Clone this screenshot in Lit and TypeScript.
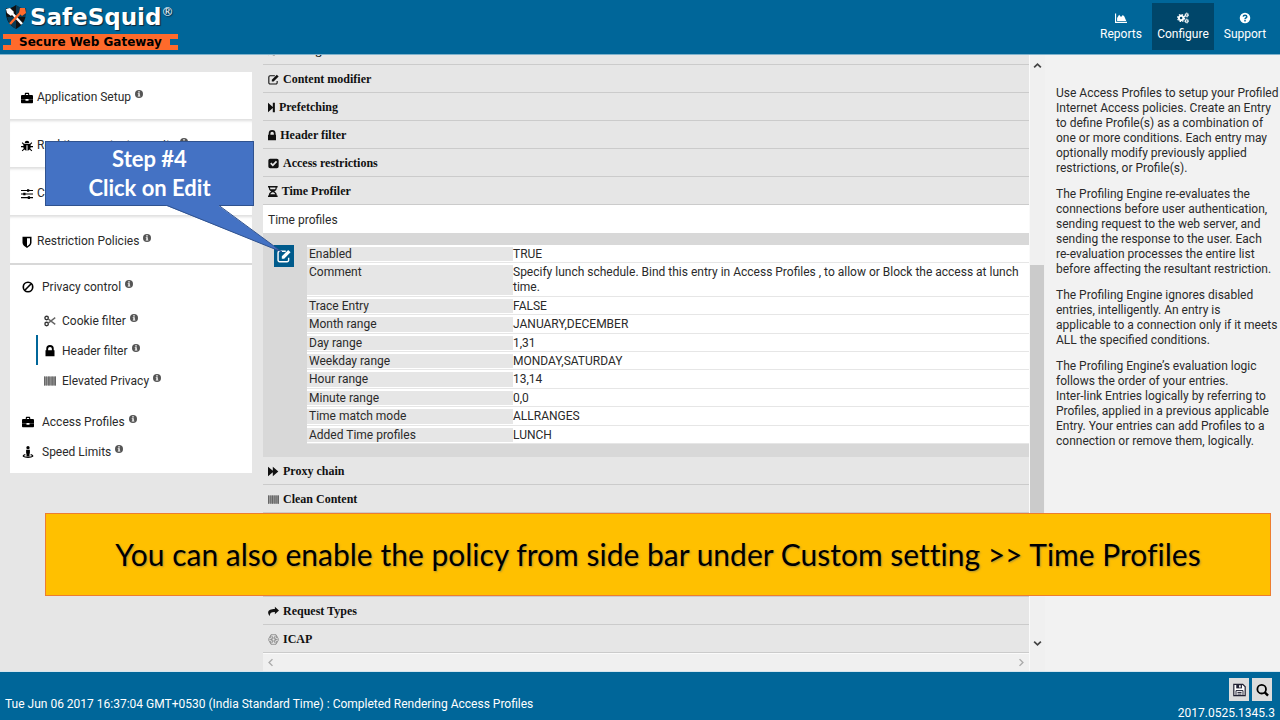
import { LitElement, html, css, svg, nothing, TemplateResult } from "lit";
import { customElement } from "lit/decorators.js";
import { classMap } from "lit/directives/class-map.js";

const shapes: Record<string, TemplateResult> = {
  briefcase: svg`<path d="M5 4V2.600C5 1.700 5.600 1 6.500 1h3C10.400 1 11 1.700 11 2.600V4h3.500c.800 0 1.500.700 1.500 1.500V9.200H0V5.500C0 4.700.700 4 1.500 4zm1.500 0h3V2.500h-3zM0 9.800h6v1.700h4V9.800h6v3.700c0 .800-.700 1.500-1.500 1.500h-13C.700 15 0 14.300 0 13.500z"/>`,
  bug: svg`<path d="M5 4a3 3 0 0 1 6 0zM4 5h8l2-2 1 1-2.200 2.300V8H16v1.500h-3.200c0 1-.2 1.700-.5 2.300L15 14l-1 1-2.500-2.200c-.8.9-1.700 1.400-2.800 1.600V7H7.300v7.400c-1.100-.2-2-.7-2.800-1.600L2 15l-1-1 2.700-2.200c-.3-.6-.5-1.300-.5-2.300H0V8h3.200V6.300L1 4l1-1z"/>`,
  sliders: svg`<path d="M0 2.500h8v-1h3v1h5V4h-5v1H8V4H0zM0 7.300h3v-1h3v1h10v1.500H6v1H3v-1H0zM0 12h9v-1h3v1h4v1.500h-4v1H9v-1H0z"/>`,
  shield: svg`<path fill-rule="evenodd" d="M2 1h12v8c0 3-3 5-6 7-3-2-6-4-6-7zm6 2v10.600c2-1.300 4-2.700 4-4.600V3z"/>`,
  ban: svg`<g fill="none" stroke="currentColor" stroke-width="2.200"><circle cx="8" cy="8" r="6.300"/><path d="M12.300 3.700l-8.600 8.600"/></g>`,
  cut: svg`<g fill="none" stroke="#333" stroke-width="1.800"><circle cx="3.500" cy="4" r="2.300"/><circle cx="3.500" cy="12" r="2.300"/><path d="M5.500 5.200L15 12.500M5.500 10.800L15 3.500" stroke="#666"/></g>`,
  lock: svg`<path fill-rule="evenodd" d="M3 7V5a5 5 0 0 1 10 0v2h1v8H2V7zm2.500 0h5V5a2.500 2.500 0 0 0-5 0z"/>`,
  barcode: svg`<path fill="#999" d="M0 2h16v12H0z"/><path fill="#666" d="M0 2h1.500v12H0zM3 2h1v12H3zM5.500 2h2v12h-2zM9 2h1v12H9zM11 2h1.500v12H11zM14 2h2v12h-2z"/>`,
  street: svg`<circle cx="8" cy="2.200" r="2.200"/><path d="M5.500 5h5v5H10v4H6v-4h-.500z"/><path fill="none" stroke="currentColor" stroke-width="1.500" d="M4.500 11.500C-1 13 2 15.200 8 15.200s9-2.200 3.500-3.700"/>`,
  edit: svg`<path fill="none" stroke="currentColor" stroke-width="1.600" d="M10 2.500H3A1.800 1.800 0 0 0 1.200 4.300v8.400a1.800 1.800 0 0 0 1.800 1.800h8.500a1.800 1.800 0 0 0 1.800-1.800V10"/><path d="M12.800 1l2.700 2.700L8.200 11H5.500V8.300z"/>`,
  step: svg`<path d="M1 1l7 6.200V1h3v14H8V8.800L1 15z"/>`,
  check: svg`<path fill-rule="evenodd" d="M3 1h10a2.500 2.500 0 0 1 2.500 2.500v9A2.500 2.500 0 0 1 13 15H3a2.500 2.500 0 0 1-2.500-2.500v-9A2.500 2.500 0 0 1 3 1zm4 11.200l6.300-6.300-1.800-1.800L7 8.600 4.900 6.500 3.100 8.300z"/>`,
  hourglass: svg`<path fill-rule="evenodd" d="M1 0h14v2.200h-1.200c0 3-1.300 4.700-3.600 5.800 2.300 1.100 3.600 2.800 3.600 5.800H15V16H1v-2.200h1.200c0-3 1.300-4.700 3.600-5.800C3.500 6.900 2.200 5.200 2.200 2.200H1zm3 2.200c0 1 .2 1.800.6 2.500h6.800c.4-.7.600-1.500.6-2.500zM8 9c-1.800.5-3 1.500-3.600 3h7.200C11 10.500 9.800 9.500 8 9z"/>`,
  forward: svg`<path d="M0 1l7 6V1l8 7-8 7V9l-7 6z"/>`,
  share: svg`<path d="M10 1l6 5.500-6 5.500V8.800C5 8.700 2.800 10 2.500 14.500 1.300 13 0 11 .200 9 .6 5.500 4.500 4.200 10 4.200z"/>`,
  hex: svg`<g fill="none" stroke="#777" stroke-width="1"><path d="M4.300 1h7.400L15.500 8l-3.800 7H4.300L.5 8z"/><circle cx="8" cy="8" r="2.200"/><circle cx="5" cy="4.600" r="1.600"/><circle cx="11" cy="4.600" r="1.600"/><circle cx="5" cy="11.400" r="1.600"/><circle cx="11" cy="11.400" r="1.600"/><path d="M2 8h4M10 8h4"/></g>`,
  chart: svg`<path d="M0 2h1.500v11H16v1.500H0zM2.800 12V8l2.700-4.500L8 6.500 10.500 4l2 2L15 12z"/>`,
  cogs: svg`<g fill="none" stroke="currentColor"><circle cx="5.500" cy="8" r="3" stroke-width="2.600"/><circle cx="5.500" cy="8" r="4.700" stroke-width="1.500" stroke-dasharray="2 1.700"/><circle cx="13" cy="4" r="1.700" stroke-width="1.500"/><circle cx="13" cy="4" r="2.700" stroke-width="1" stroke-dasharray="1.200 .9"/><circle cx="13" cy="12" r="1.700" stroke-width="1.500"/><circle cx="13" cy="12" r="2.700" stroke-width="1" stroke-dasharray="1.200 .9"/></g>`,
  question: svg`<circle cx="8" cy="8" r="7"/><path fill="none" stroke="#069" stroke-width="2" d="M5.600 6.200C5.800 3.500 10.400 3.600 10.400 6.200 10.400 7.800 8 7.800 8 9.600M8 10.800v2"/>`,
  info: svg`<circle cx="8" cy="8" r="8"/><path fill="#fff" d="M6.500 2.500h3v2.300h-3zM5.500 6.300h4v5h1.200v1.900H5.500v-1.900h1.200V8H5.500z"/>`,
  save: svg`<path fill="#fff" stroke="#223" stroke-width="1.500" d="M1 1h11l3 3v11H1z"/><path fill="#223" d="M4 1h7v5H4z"/><path fill="#fff" d="M7.500 2h2v3h-2z"/><path fill="none" stroke="#223" stroke-width="1.200" d="M3.700 15V8.700h8.600V15M5.500 11h5M5.500 13h5"/>`,
  search: svg`<g fill="none" stroke="#000"><circle cx="7" cy="7" r="5.300" stroke-width="2.200"/><path stroke-width="3" d="M10.800 11l4 4"/></g>`,
  up: svg`<path fill="none" stroke="currentColor" stroke-width="3" d="M2 11.500l6-6 6 6"/>`,
  down: svg`<path fill="none" stroke="currentColor" stroke-width="3" d="M2 4.500l6 6 6-6"/>`,
  left: svg`<path fill="none" stroke="currentColor" stroke-width="2.500" d="M11.500 2l-6 6 6 6"/>`,
  right: svg`<path fill="none" stroke="currentColor" stroke-width="2.500" d="M4.500 2l6 6-6 6"/>`,
};

const snug: Record<string, string> = { step: "1 0 10 16", lock: "2 0 12 16", hourglass: "1 0 14 16" };

const glyph = (name: string, cls = "", box = "0 0 16 16") =>
  html`<svg class="icon ${cls}" viewBox=${box} aria-hidden="true">${shapes[name]}</svg>`;

type Item = { icon: string; label: string; active?: boolean };

const sections: Item[] = [
  { icon: "briefcase", label: "Application Setup" },
  { icon: "bug", label: "Real time content security" },
  { icon: "sliders", label: "Custom Settings" },
  { icon: "shield", label: "Restriction Policies" },
];
const privacy: Item[] = [
  { icon: "cut", label: "Cookie filter" },
  { icon: "lock", label: "Header filter", active: true },
  { icon: "barcode", label: "Elevated Privacy" },
];
const above: Item[] = [
  { icon: "step", label: "Caching" },
  { icon: "edit", label: "Content modifier" },
  { icon: "step", label: "Prefetching" },
  { icon: "lock", label: "Header filter" },
  { icon: "check", label: "Access restrictions" },
  { icon: "hourglass", label: "Time Profiler" },
];
const below: Item[] = [
  { icon: "forward", label: "Proxy chain" },
  { icon: "barcode", label: "Clean Content" },
  { icon: "", label: "" },
  { icon: "", label: "" },
  { icon: "", label: "" },
  { icon: "share", label: "Request Types" },
  { icon: "hex", label: "ICAP" },
];
const fields: [string, string][] = [
  ["Enabled", "TRUE"],
  ["Comment", "Specify lunch schedule. Bind this entry in Access Profiles , to allow or Block the access at lunch time."],
  ["Trace Entry", "FALSE"],
  ["Month range", "JANUARY,DECEMBER"],
  ["Day range", "1,31"],
  ["Weekday range", "MONDAY,SATURDAY"],
  ["Hour range", "13,14"],
  ["Minute range", "0,0"],
  ["Time match mode", "ALLRANGES"],
  ["Added Time profiles", "LUNCH"],
];
const help: string[][] = [
  ["Use Access Profiles to setup your Profiled", "Internet Access policies. Create an Entry", "to define Profile(s) as a combination of", "one or more conditions. Each entry may", "optionally modify previously applied", "restrictions, or Profile(s)."],
  ["The Profiling Engine re-evaluates the", "connections before user authentication,", "sending request to the web server, and", "sending the response to the user. Each", "re-evaluation processes the entire list", "before affecting the resultant restriction."],
  ["The Profiling Engine ignores disabled", "entries, intelligently. An entry is", "applicable to a connection only if it meets", "ALL the specified conditions."],
  ["The Profiling Engine’s evaluation logic", "follows the order of your entries.", "Inter-link Entries logically by referring to", "Profiles, applied in a previous applicable", "Entry. Your entries can add Profiles to a", "connection or remove them, logically."],
];

@customElement("app-root")
export class AppRoot extends LitElement {
  static styles = css`
    :host {
      display: flex;
      flex-direction: column;
      position: relative;
      height: 100vh;
      overflow: hidden;
      background: #e6e6e6;
      color: #2a2a2a;
      font: 12px/15px Roboto, "Open Sans", sans-serif;
    }
    * { box-sizing: border-box; }
    a { color: inherit; text-decoration: none; }
    button { font: inherit; color: inherit; border: 0; padding: 0; cursor: pointer; }
    .icon { display: block; width: 12px; height: 12px; flex: none; fill: currentColor; }

    .top {
      display: flex;
      justify-content: space-between;
      align-items: flex-start;
      flex: none;
      height: 55px;
      padding: 3px 4px 0 3px;
      background: #069;
      border-bottom: 1px solid #7fb2cc;
      color: #fff;
    }
    .logo { display: flex; flex-direction: column; width: 175px; font-family: "DejaVu Sans", sans-serif; font-weight: 700; }
    .brand { display: flex; align-items: center; gap: 3px; height: 31px; padding: 0 0 3px 2px; font-size: 23px; line-height: 28px; text-shadow: 1px 1px 1px #123; }
    .crest { width: 22px; height: 26px; flex: none; }
    .reg { align-self: flex-start; font-size: 12px; line-height: 18px; font-weight: 400; margin-left: -3px; }
    .tagline {
      display: grid;
      grid-template-columns: 8px 1fr 8px;
      align-items: center;
      height: 16px;
      background: #ff6a2b;
      color: #000;
      font-size: 12px;
      line-height: 16px;
      text-align: center;
    }
    .notch { height: 6px; background: #069; }
    .menu { display: flex; }
    .tab { display: flex; flex-direction: column; align-items: center; gap: 3px; height: 47px; min-width: 62px; padding: 9px 5px 0; }
    .tab.active { background: #00466a; }

    .main { display: flex; flex: 1; min-height: 0; }
    .side { flex: none; width: 263px; padding: 17px 11px 0 10px; }
    .side .icon { color: #000; }
    .card { display: flex; align-items: center; gap: 4px; height: 48px; padding: 4px 0 0 11px; background: #fff; border-bottom: 1px solid #e2e2e2; box-shadow: inset 0 3px 3px -2px #ddd; }
    .card:first-child { box-shadow: none; }
    .card.open { height: 49px; border-bottom: 2px solid #d8d8d8; }
    .tree { background: #fff; padding: 6px 0 7px; }
    .node { display: flex; align-items: center; gap: 8px; height: 30px; padding: 2px 0 0 12px; }
    .tip { display: flex; gap: 4px; }
    .side .info { width: 8px; height: 8px; color: #555; }
    .nest { padding: 4px 0 11px 26px; }
    .nest .node { gap: 6px; padding-left: 8px; }
    .nest .active { border-left: 2px solid #069; padding-left: 6px; }

    .center { display: flex; flex-direction: column; flex: 1; min-width: 0; }
    .list { display: flex; flex-direction: column; justify-content: flex-end; flex: 1; min-height: 0; overflow: hidden; }
    .row {
      display: flex;
      align-items: center;
      gap: 4px;
      flex: none;
      width: 100%;
      height: 28px;
      padding: 2px 0 0 5px;
      background: #e6e6e6;
      border-bottom: 1px solid #cbcbcb;
      color: #111;
      font: 12px/15px "Liberation Serif", serif;
      font-weight: 700;
      text-align: left;
    }
    .row:first-child { padding-top: 0; }
    .row .icon { width: auto; height: 11px; }
    .subtitle { margin: 0; flex: none; height: 28px; padding: 8px 5px 0; background: #fff; font-size: 12px; line-height: 15px; font-weight: 400; }
    .panel { display: flex; gap: 13px; align-items: flex-start; flex: none; padding: 12px 0 13px 11px; background: #d8d8d8; }
    .edit { display: grid; place-items: center; width: 20px; height: 22px; background: #005b8c; color: #fff; }
    .edit .icon { width: 14px; height: 14px; }
    table { flex: 1; height: 199px; border-spacing: 0; background: #fff; }
    th, td { padding: 2px 0 0; border-bottom: 1px solid #e6e6e6; text-align: left; vertical-align: top; font-weight: 400; }
    th { width: 206px; padding-left: 2px; background: #e6e6e6; box-shadow: inset 0 2px #fff, inset 0 -1px #fff; }
    .hbar { display: flex; justify-content: space-between; align-items: center; flex: none; height: 18px; padding: 0 3px; background: #f0f0f0; border-top: 1px solid #fafafa; color: #aaa; }
    .hbar .icon, .vbar .icon { width: 9px; height: 9px; }
    .vbar { display: flex; flex-direction: column; align-items: center; flex: none; width: 16px; padding: 6px 0 23px; background: #f0f0f0; border-left: 1px solid #fafafa; color: #444; }
    .track { display: flex; flex-direction: column; justify-content: flex-end; flex: 1; width: 100%; padding-bottom: 82px; }
    .thumb { width: 14px; height: 60%; background: #cbcbcb; }

    .help { flex: none; width: 235px; padding: 31px 0 0 11px; background: #f2f2f2; }
    .help p { margin: 0 0 11px; white-space: nowrap; }

    .foot { display: flex; justify-content: space-between; flex: none; height: 49px; background: #069; border-top: 1px solid #d5e5ee; padding: 6px 5px 0; color: #fff; }
    .status { padding-top: 19px; }
    .tools { display: flex; flex-direction: column; align-items: flex-end; gap: 5px; }
    .buttons { display: flex; gap: 3px; padding-right: 3px; }
    .tool { display: grid; place-items: center; width: 20px; height: 23px; background: #ddd; }
    .tool .icon { width: 13px; height: 14px; }

    .callout { position: absolute; left: 45px; top: 141px; width: 209px; height: 65px; padding-top: 2px; background: #4472c4; border: 1px solid #2f528f; color: #fff; font: 700 22px/29px Lato, sans-serif; text-align: center; }
    .tail { position: absolute; left: 160px; top: 204px; width: 125px; height: 50px; }
    .banner { position: absolute; left: 45px; right: 9px; top: 513px; height: 83px; display: flex; align-items: center; justify-content: center; padding-bottom: 2px; background: #ffc000; border: 1px solid #ed7d31; color: #000; font: 30px/36px Lato, sans-serif; font-variant-ligatures: none; text-shadow: 1px 1px 2px #6668; white-space: nowrap; }
  `;

  private tip(label: string) {
    return html`<span class="tip"><span>${label}</span>${glyph("info", "info")}</span>`;
  }

  private node(item: Item) {
    return html`<a href="#" class=${classMap({ node: true, active: !!item.active })}>${glyph(item.icon)}${this.tip(item.label)}</a>`;
  }

  private row(item: Item) {
    return item.label
      ? html`<button class="row">${glyph(item.icon, "", snug[item.icon])}<span>${item.label}</span></button>`
      : html`<div class="row"></div>`;
  }

  render() {
    return html`
      <header class="top">
        <div class="logo">
          <div class="brand">
            <svg class="crest" viewBox="0 0 22 26" aria-hidden="true">
              <path fill="#111" d="M1 4c4 1 7-1 10-3 3 2 6 4 10 3 1 9-2 17-10 21C3 21 0 13 1 4z" />
              <path fill="#069" d="M11 1c3 2 6 4 10 3v9H11zM2 13h9v12C6 22 3 18 2 13z" opacity=".5" />
              <path fill="none" stroke="#fff" stroke-width="2.500" d="M5 7l12 13" />
              <path fill="#fff" d="M1 5l4-1 4 4-3 4-4-3z" />
              <path fill="none" stroke="#ff6a2b" stroke-width="2.500" d="M17 7L5 20" />
              <path fill="#ff6a2b" d="M15 4l5 0 1 5-4 3-3-3z" />
            </svg>
            <span>SafeSquid</span><span class="reg">®</span>
          </div>
          <div class="tagline"><span class="notch"></span><span>Secure Web Gateway</span><span class="notch"></span></div>
        </div>
        <nav class="menu">
          <a href="#" class="tab">${glyph("chart")}<span>Reports</span></a>
          <a href="#" class="tab active">${glyph("cogs")}<span>Configure</span></a>
          <a href="#" class="tab">${glyph("question")}<span>Support</span></a>
        </nav>
      </header>
      <main class="main">
        <nav class="side">
          ${sections.map((s, i) => html`<a href="#" class=${classMap({ card: true, open: i === 3 })}>${glyph(s.icon)}${this.tip(s.label)}</a>`)}
          <div class="tree">
            ${this.node({ icon: "ban", label: "Privacy control" })}
            <div class="nest">${privacy.map((p) => this.node(p))}</div>
            ${this.node({ icon: "briefcase", label: "Access Profiles" })}
            ${this.node({ icon: "street", label: "Speed Limits" })}
          </div>
        </nav>
        <section class="center">
          <div class="list">
            ${above.map((r) => this.row(r))}
            <h2 class="subtitle">Time profiles</h2>
            <div class="panel">
              <button class="edit" aria-label="Edit">${glyph("edit")}</button>
              <table>
                <tbody>
                  ${fields.map(([k, v]) => html`<tr><th scope="row">${k}</th><td>${v}</td></tr>`)}
                </tbody>
              </table>
            </div>
            ${below.map((r) => this.row(r))}
          </div>
          <div class="hbar">${glyph("left")}${glyph("right")}</div>
        </section>
        <div class="vbar">${glyph("up")}<div class="track"><div class="thumb"></div></div>${glyph("down")}</div>
        <aside class="help">
          ${help.map((p) => html`<p>${p.map((line, i) => html`${i ? html`<br />` : nothing}${line}`)}</p>`)}
        </aside>
      </main>
      <footer class="foot">
        <span class="status">Tue Jun 06 2017 16:37:04 GMT+0530 (India Standard Time) : Completed Rendering Access Profiles</span>
        <div class="tools">
          <div class="buttons">
            <button class="tool" aria-label="Save">${glyph("save")}</button>
            <button class="tool" aria-label="Search">${glyph("search")}</button>
          </div>
          <span>2017.0525.1345.3</span>
        </div>
      </footer>
      <div class="callout">Step #4<br />Click on Edit</div>
      <svg class="tail" viewBox="0 0 125 50" aria-hidden="true">
        <path fill="#4472c4" d="M6 0L7 2 122 48 59 2V0z" />
        <path fill="none" stroke="#2f528f" d="M7 1.500L122 48 59 1.500" />
      </svg>
      <div class="banner">You can also enable the policy from side bar under Custom setting &gt;&gt; Time Profiles</div>
    `;
  }
}
